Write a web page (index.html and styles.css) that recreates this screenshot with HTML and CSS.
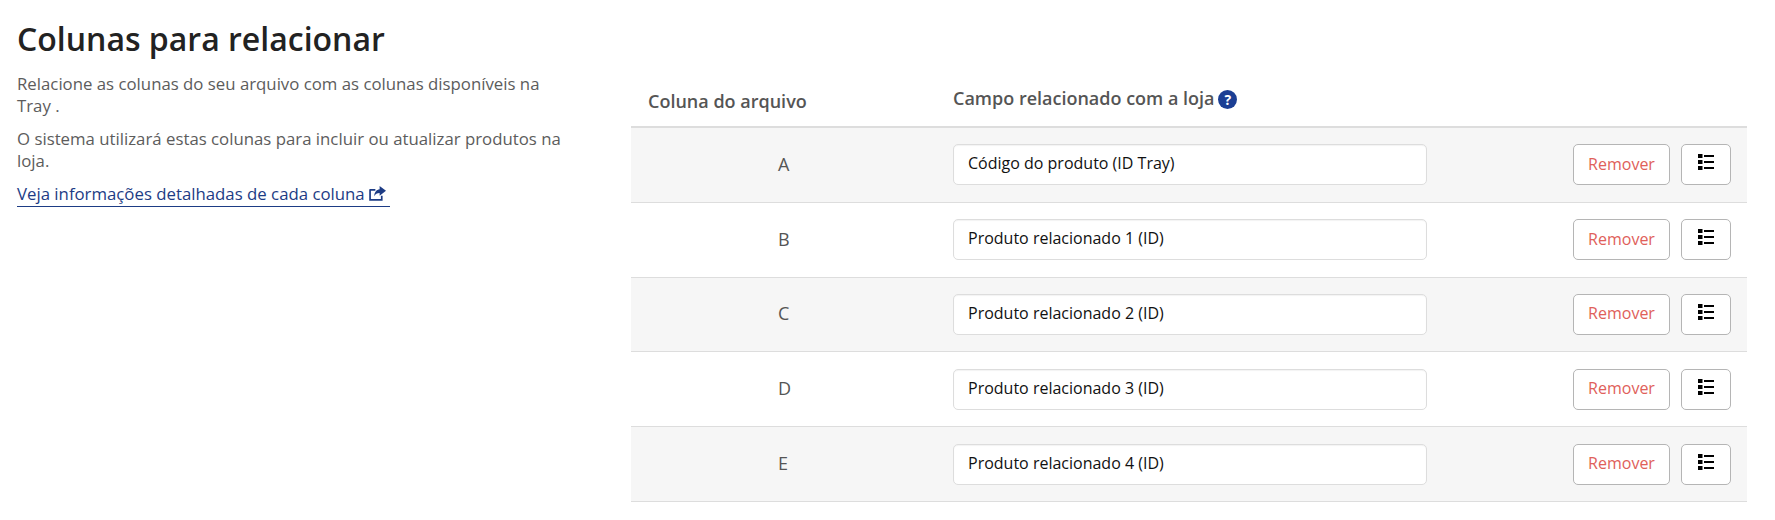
FILE: index.html
```html
<!DOCTYPE html>
<html lang="pt-BR">
<head>
<meta charset="utf-8">
<title>Colunas para relacionar</title>
<link rel="stylesheet" href="styles.css">
</head>
<body>
<main class="page">
  <section class="intro">
    <h1 class="title">Colunas para relacionar</h1>
    <p class="text">Relacione as colunas do seu arquivo com as colunas disponíveis na Tray .</p>
    <p class="text">O sistema utilizará estas colunas para incluir ou atualizar produtos na loja.</p>
    <a class="link" href="#">Veja informações detalhadas de cada coluna
      <svg class="share" viewBox="0 0 16 14" aria-hidden="true"><path d="M1 3.500h5M1 3v10h11V9" fill="none" stroke="currentColor" stroke-width="1.600"/><path d="M10 0 16 4.500 10 9V6.500C7.500 6.500 6 7.300 5 9.500 5 6 7 3.300 10 3z" fill="currentColor"/></svg>
    </a>
  </section>
  <section class="mapping">
    <div class="head">
      <div class="head-file">Coluna do arquivo</div>
      <div class="head-field">Campo relacionado com a loja <span class="help">?</span></div>
    </div>
    <div class="row">
      <div class="letter">A</div>
      <div class="field">Código do produto (ID Tray)</div>
      <button class="remove">Remover</button>
      <button class="list"><svg viewBox="0 0 16 16" aria-hidden="true"><path d="M0 0h4.500v4H0zM0 6h4.500v4H0zM0 12h4.500v4H0zM6 1h10v2H6zM6 7h10v2H6zM6 13h10v2H6z"/></svg></button>
    </div>
    <div class="row">
      <div class="letter">B</div>
      <div class="field">Produto relacionado 1 (ID)</div>
      <button class="remove">Remover</button>
      <button class="list"><svg viewBox="0 0 16 16" aria-hidden="true"><path d="M0 0h4.500v4H0zM0 6h4.500v4H0zM0 12h4.500v4H0zM6 1h10v2H6zM6 7h10v2H6zM6 13h10v2H6z"/></svg></button>
    </div>
    <div class="row">
      <div class="letter">C</div>
      <div class="field">Produto relacionado 2 (ID)</div>
      <button class="remove">Remover</button>
      <button class="list"><svg viewBox="0 0 16 16" aria-hidden="true"><path d="M0 0h4.500v4H0zM0 6h4.500v4H0zM0 12h4.500v4H0zM6 1h10v2H6zM6 7h10v2H6zM6 13h10v2H6z"/></svg></button>
    </div>
    <div class="row">
      <div class="letter">D</div>
      <div class="field">Produto relacionado 3 (ID)</div>
      <button class="remove">Remover</button>
      <button class="list"><svg viewBox="0 0 16 16" aria-hidden="true"><path d="M0 0h4.500v4H0zM0 6h4.500v4H0zM0 12h4.500v4H0zM6 1h10v2H6zM6 7h10v2H6zM6 13h10v2H6z"/></svg></button>
    </div>
    <div class="row">
      <div class="letter">E</div>
      <div class="field">Produto relacionado 4 (ID)</div>
      <button class="remove">Remover</button>
      <button class="list"><svg viewBox="0 0 16 16" aria-hidden="true"><path d="M0 0h4.500v4H0zM0 6h4.500v4H0zM0 12h4.500v4H0zM6 1h10v2H6zM6 7h10v2H6zM6 13h10v2H6z"/></svg></button>
    </div>
  </section>
</main>
</body>
</html>
```
FILE: styles.css
```css
* { box-sizing: border-box; }
html, body { margin: 0; background: #fff; }
body { font-family: "Open Sans", "Noto Sans", sans-serif; font-size: 16px; color: #555; height: 520px; overflow: hidden; }
.page { display: grid; grid-template-columns: 550px 1116px; column-gap: 64px; padding: 17px 28px 0 17px; align-items: start; }
.title { margin: 0 0 12px; font-size: 32px; line-height: 44px; font-weight: 600; color: #222; }
.text { margin: 0 0 12px; font-size: 16.800px; line-height: 21.500px; color: #5c5c5c; }
.link { display: inline-block; font-size: 16.800px; color: #1d3c85; text-decoration: none; border-bottom: 1px solid #1d3c85; line-height: 22px; padding-bottom: 1px; }
.share { width: 17px; height: 15px; margin-right: 4px; vertical-align: -1px; }
.mapping { margin-top: 61px; }
.head { display: flex; height: 50px; border-bottom: 2px solid #ddd; padding-bottom: 3px; align-items: center; font-size: 18px; font-weight: 600; color: #555; }
.head-file { width: 322px; padding-left: 17px; white-space: nowrap; }
.head-field { margin-top: -6px; }
.help { display: inline-flex; justify-content: center; align-items: center; width: 19px; height: 19px; border-radius: 50%; background: #1b3f94; color: #fff; font-size: 14px; font-weight: 700; vertical-align: 0; margin-left: -1px; }
.row { display: flex; align-items: center; height: 74.800px; border-bottom: 1px solid #ddd; padding-right: 16px; }
.row:nth-of-type(even) { background: #f6f6f6; }
.letter { width: 322px; padding: 0 0 2px 147px; font-size: 18px; }
.field { width: 474px; height: 41px; padding: 0 14px; line-height: 37px; color: #111; background: #fff; border: 1px solid #ddd; border-radius: 5px; box-shadow: inset 0 1px 1px rgba(0,0,0,.05); margin-right: auto; }
.remove, .list { height: 41px; background: #fff; border: 1px solid #b5b5b5; border-radius: 5px; font: inherit; padding: 0 0 2px; }
.remove { width: 97px; color: #e0605a; margin-right: 11px; }
.list { width: 50px; display: flex; align-items: center; justify-content: center; }
.list svg { width: 16px; height: 16px; margin-top: -3px; }
```
